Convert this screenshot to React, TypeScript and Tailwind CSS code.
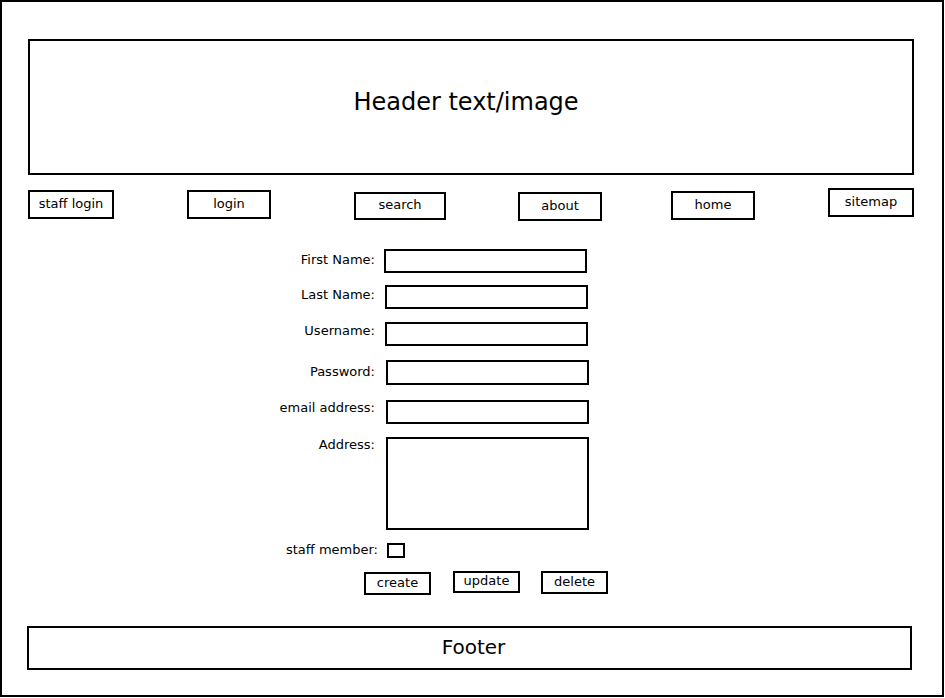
import React from 'react';

const navItems = [
  { label: 'staff login', ml: 'ml-0', mt: 'mt-[2px]', w: 'w-[86px]', h: 'h-[29px]' },
  { label: 'login', ml: 'ml-[73px]', mt: 'mt-[2px]', w: 'w-[84px]', h: 'h-[29px]' },
  { label: 'search', ml: 'ml-[83px]', mt: 'mt-[4px]', w: 'w-[92px]', h: 'h-[28px]' },
  { label: 'about', ml: 'ml-[72px]', mt: 'mt-[4px]', w: 'w-[84px]', h: 'h-[29px]' },
  { label: 'home', ml: 'ml-[69px]', mt: 'mt-[3px]', w: 'w-[84px]', h: 'h-[29px]' },
  { label: 'sitemap', ml: 'ml-[73px]', mt: 'mt-0', w: 'w-[86px]', h: 'h-[29px]' },
];

function Field({ label, rowMt, labelMt, inputMl, h = 'h-[24px]', area = false }: {
  label: string;
  rowMt: string;
  labelMt: string;
  inputMl: string;
  h?: string;
  area?: boolean;
}) {
  return (
    <div className={`flex items-start ${rowMt}`}>
      <label className={`w-[113px] text-right text-[13px] leading-[16px] ${labelMt}`}>{label}</label>
      {area ? (
        <textarea className={`${inputMl} w-[203px] ${h} border-2 border-black resize-none outline-none`} />
      ) : (
        <input className={`${inputMl} w-[203px] ${h} border-2 border-black outline-none`} />
      )}
    </div>
  );
}

export default function App() {
  return (
    <div className="w-[944px] h-[697px] border-2 border-black bg-white text-black font-['DejaVu_Sans',sans-serif]">
      {/* Header */}
      <div className="ml-[26px] mt-[37px] w-[886px] h-[136px] border-2 border-black flex items-center justify-center pr-[10px] pb-[10px]">
        <span className="text-[24px] leading-[28px]">Header text/image</span>
      </div>

      {/* Nav */}
      <div className="ml-[26px] mt-[13px] flex items-start h-[33px]">
        {navItems.map(n => (
          <button
            key={n.label}
            className={`${n.ml} ${n.mt} ${n.w} ${n.h} border-2 border-black flex items-center justify-center text-[13px] leading-[16px] pb-[2px]`}
          >
            {n.label}
          </button>
        ))}
      </div>

      {/* Form */}
      <form className="ml-[260px] mt-[28px] flex flex-col">
        <Field label="First Name:" rowMt="mt-0" labelMt="mt-[3px]" inputMl="ml-[9px]" />
        <Field label="Last Name:" rowMt="mt-[12px]" labelMt="mt-[2px]" inputMl="ml-[10px]" />
        <Field label="Username:" rowMt="mt-[13px]" labelMt="mt-[1px]" inputMl="ml-[10px]" />
        <Field label="Password:" rowMt="mt-[14px]" labelMt="mt-[4px]" inputMl="ml-[11px]" h="h-[25px]" />
        <Field label="email address:" rowMt="mt-[15px]" labelMt="mt-0" inputMl="ml-[11px]" />
        <Field label="Address:" rowMt="mt-[13px]" labelMt="mt-0" inputMl="ml-[11px]" h="h-[93px]" area />

        <div className="flex items-start mt-[13px]">
          <label className="w-[116px] text-right text-[13px] leading-[16px] -mt-[1px]">staff member:</label>
          <input type="checkbox" className="ml-[9px] w-[18px] h-[15px] border-2 border-black appearance-none" />
        </div>

        <div className="flex items-start mt-[13px] ml-[102px]">
          <button type="button" className="mt-[1px] w-[67px] h-[23px] border-2 border-black text-[13px] leading-[16px] flex items-center justify-center pb-[1px]">create</button>
          <button type="button" className="ml-[22px] w-[67px] h-[22px] border-2 border-black text-[13px] leading-[16px] flex items-center justify-center pb-[2px]">update</button>
          <button type="button" className="ml-[21px] w-[67px] h-[23px] border-2 border-black text-[13px] leading-[16px] flex items-center justify-center pb-[1px]">delete</button>
        </div>
      </form>

      {/* Footer */}
      <div className="ml-[25px] mt-[31px] w-[885px] h-[44px] border-2 border-black flex items-center justify-center pl-[8px] pb-[2px]">
        <span className="text-[20px] leading-[24px]">Footer</span>
      </div>
    </div>
  );
}
